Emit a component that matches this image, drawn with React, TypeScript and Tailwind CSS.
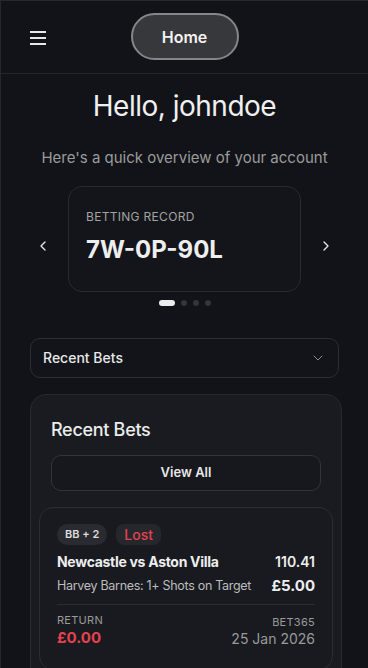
import React from 'react';
import { ChevronLeft, ChevronRight, ChevronDown } from 'lucide-react';

const font = { fontFamily: 'Inter, "Noto Sans", sans-serif' };

const Header = () => (
  <header className="relative flex h-[73px] items-center justify-center border-b border-[#24262b]">
    <button className="absolute left-[29px] top-[30px] flex w-[16px] flex-col gap-[4.5px]">
      <span className="h-[1.5px] w-full bg-[#e8e8e8]" />
      <span className="h-[1.5px] w-full bg-[#e8e8e8]" />
      <span className="h-[1.5px] w-full bg-[#e8e8e8]" />
    </button>
    <div className="mt-[-1px] flex h-[47px] w-[108px] items-center justify-center rounded-full border-2 border-[#85868a] bg-[#37383c] text-[16px] font-semibold text-[#f2f2f2]">
      Home
    </div>
  </header>
);

const RecordCarousel = () => (
  <div className="mt-[16px] flex flex-col items-center">
    <div className="flex items-center gap-[17px]">
      <ChevronLeft className="mt-[14px] h-4 w-4 text-[#e5e5e5]" strokeWidth={2} />
      <div className="flex h-[106px] w-[233px] flex-col rounded-[14px] border border-[#282a30] bg-[#13151a] px-[17px] pt-[22px]">
        <div className="text-[12px] leading-[15px] tracking-wide text-[#a3a3a3]">BETTING RECORD</div>
        <div className="mt-[14px] text-[24px] font-bold leading-[24px] text-[#eeeeee]">7W-0P-90L</div>
      </div>
      <ChevronRight className="mt-[14px] h-4 w-4 text-[#e5e5e5]" strokeWidth={2} />
    </div>
    <div className="mt-[8px] flex items-center gap-[6px]">
      <span className="h-[6px] w-[16px] rounded-full bg-[#ececec]" />
      <span className="h-[6px] w-[6px] rounded-full bg-[#33353a]" />
      <span className="h-[6px] w-[6px] rounded-full bg-[#33353a]" />
      <span className="h-[6px] w-[6px] rounded-full bg-[#33353a]" />
    </div>
  </div>
);

const BetCard = () => (
  <div className="mt-[16px] rounded-[14px] border border-[#2a2d33] bg-[#181a20] px-[17px] pb-[20px] pt-[16px]">
    <div className="flex items-center gap-[9px]">
      <span className="rounded-full bg-[#2a2b30] px-[8px] text-[11px] font-semibold leading-[21px] text-[#dcdcdc]">BB + 2</span>
      <span className="rounded-[8px] bg-[#26272d] px-[8px] text-[14px] font-medium leading-[21px] text-[#e3434f]">Lost</span>
    </div>
    <div className="mt-[7px] flex items-center justify-between leading-[20px]">
      <span className="whitespace-nowrap text-[14px] font-bold tracking-[-0.3px] text-[#eeeeee]">Newcastle vs Aston Villa</span>
      <span className="text-[14px] font-semibold text-[#eeeeee]">110.41</span>
    </div>
    <div className="mt-[3px] flex items-center justify-between gap-2 leading-[22px]">
      <span className="whitespace-nowrap text-[12.5px] tracking-[-0.3px] text-[#bdbdbd]">Harvey Barnes: 1+ Shots on Target</span>
      <span className="whitespace-nowrap text-[15px] font-bold text-[#eeeeee]">£5.00</span>
    </div>
    <div className="mt-[7px] h-px bg-[#2a2d33]" />
    <div className="mt-[7px] flex items-start justify-between">
      <div className="flex flex-col">
        <span className="text-[11px] leading-[16px] tracking-wide text-[#9a9a9a]">RETURN</span>
        <span className="mt-[-1px] text-[15px] font-bold leading-[22px] text-[#e3434f]">£0.00</span>
      </div>
      <div className="mt-[2px] flex flex-col items-end">
        <span className="text-[11px] leading-[16px] tracking-wide text-[#9a9a9a]">BET365</span>
        <span className="mt-[-1px] text-[14px] leading-[20px] text-[#9a9a9a]">25 Jan 2026</span>
      </div>
    </div>
  </div>
);

export default function App() {
  return (
    <div style={font} className="h-[668px] w-[368px] overflow-hidden border-l border-t border-[#25272c] bg-[#111318] text-white">
      <Header />
      <h1 className="mt-[11px] text-center text-[28px] font-normal tracking-[-0.5px] text-[#f0f0f0]">Hello, johndoe</h1>
      <p className="mt-[20px] text-center text-[15px] text-[#9b9b9b]">Here's a quick overview of your account</p>
      <RecordCarousel />
      <div className="mx-[29px] mt-[32px] flex h-[40px] items-center justify-between rounded-[10px] border border-[#2c2e34] bg-[#121419] px-[12px]">
        <span className="text-[14px] font-medium text-[#e8e8e8]">Recent Bets</span>
        <ChevronDown className="h-4 w-4 text-[#8a8a8a]" strokeWidth={1.5} />
      </div>
      <div className="ml-[29px] mr-[26px] mt-[16px] rounded-t-[16px] border border-[#262930] bg-[#191b21] px-[8px] pb-4 pt-[21px]">
        <h2 className="px-[12px] text-[18px] font-medium tracking-[-0.3px] text-[#ececec]">Recent Bets</h2>
        <button className="mx-[12px] mt-[12px] flex h-[36px] w-[calc(100%-24px)] items-center justify-center rounded-[10px] border border-[#32343a] bg-[#16181d] text-[13px] font-semibold text-[#e8e8e8]">
          View All
        </button>
        <BetCard />
      </div>
    </div>
  );
}
